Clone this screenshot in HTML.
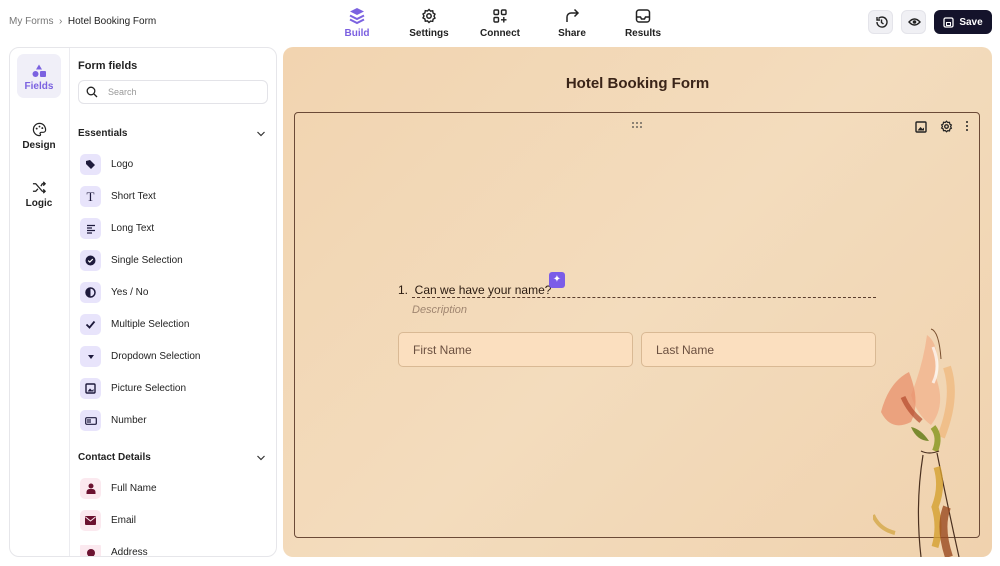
<!DOCTYPE html>
<html><head><meta charset="utf-8"><style>
*{box-sizing:border-box;margin:0;padding:0}
body{width:1000px;height:566px;background:#fff;font-family:"Liberation Sans",sans-serif;color:#1a1a2e;position:relative;overflow:hidden}
.abs{position:absolute}
.crumb{left:9px;top:16px;font-size:10px;color:#777}
.crumb b{font-weight:normal;color:#222}
.nav{top:0;width:70px;text-align:center;font-size:10px;font-weight:bold;color:#222}
.nav svg{display:block;margin:7px auto 3px}
.btn{top:10px;width:25px;height:24px;border-radius:6px;background:#f0f0f4;border:1px solid #e4e4ea}
.save{left:934px;top:10px;width:58px;height:24px;border-radius:6px;background:#14132b;color:#fff;font-size:10px;font-weight:bold;display:flex;align-items:center;justify-content:center;gap:5px}
.side{left:9px;top:47px;width:268px;height:510px;border:1px solid #e6e6ea;border-radius:10px;overflow:hidden}
.col{left:59px;top:0;width:1px;height:510px;background:#ececf0}
.tab{left:7px;width:44px;height:44px;border-radius:7px;text-align:center;font-size:10px;font-weight:bold;color:#222}
.tab svg{display:block;margin:10px auto 3px}
.item{left:70px;font-size:10px;color:#222;display:flex;align-items:center;gap:10px}
.ic{width:21px;height:21px;border-radius:5px;background:#e8e4fb;display:flex;align-items:center;justify-content:center}
.ic.p{background:#fbe9ef}
.hd{left:68px;font-size:10px;font-weight:bold;color:#222}
.chev{left:246px}
.canvas{left:283px;top:47px;width:709px;height:510px;border-radius:10px;background:linear-gradient(135deg,#f2d4b0,#f3dcbd 50%,#f0d2ae);overflow:hidden}
.inner{left:11px;top:65px;width:686px;height:426px;border:1px solid #6b4a37;border-radius:4px}
.fld{top:285px;width:235px;height:35px;border:1px solid #d9b994;border-radius:5px;background:#fbdfbf;font-size:12px;color:#6b5040;padding:10px 0 0 14px}
</style></head><body>
<div class="abs crumb">My Forms &nbsp;›&nbsp; <b>Hotel Booking Form</b></div>

<div class="abs nav" style="left:322px;color:#7b5fe0"><svg width="16" height="18" viewBox="0 0 16 18"><path d="M8 1L15 4.5 8 8 1 4.5Z" fill="#7b62e0"/><path d="M1 8.5L8 12 15 8.5M1 12.5L8 16 15 12.5" stroke="#7b62e0" stroke-width="2" fill="none"/></svg>Build</div>
<div class="abs nav" style="left:394px"><svg width="16" height="18" viewBox="0 0 16 16"><circle cx="8" cy="8" r="2.2" fill="none" stroke="#222" stroke-width="1.5"/><path d="M8 1.5l1.5 1.6 2.2-.3.4 2.2 1.9 1.1-1 2 1 2-1.9 1.1-.4 2.2-2.2-.3L8 14.5l-1.5-1.6-2.2.3-.4-2.2L2 9.9l1-1.9-1-2 1.9-1.1.4-2.2 2.2.3z" fill="none" stroke="#222" stroke-width="1.4"/></svg>Settings</div>
<div class="abs nav" style="left:465px"><svg width="16" height="18" viewBox="0 0 16 16"><rect x="2" y="2" width="4.5" height="4.5" rx="1" fill="none" stroke="#222" stroke-width="1.4"/><rect x="9.5" y="2" width="4.5" height="4.5" rx="1" fill="none" stroke="#222" stroke-width="1.4"/><rect x="2" y="9.5" width="4.5" height="4.5" rx="1" fill="none" stroke="#222" stroke-width="1.4"/><path d="M11.8 9v5.5M9 11.8h5.5" stroke="#222" stroke-width="1.4"/></svg>Connect</div>
<div class="abs nav" style="left:537px"><svg width="16" height="18" viewBox="0 0 16 16"><path d="M3 14V9a4 4 0 0 1 4-4h7M10.5 1.5L14 5l-3.5 3.5" fill="none" stroke="#222" stroke-width="1.5"/></svg>Share</div>
<div class="abs nav" style="left:608px"><svg width="16" height="18" viewBox="0 0 16 16"><rect x="1.5" y="2" width="13" height="12" rx="2.5" fill="none" stroke="#222" stroke-width="1.5"/><path d="M1.5 9h4l1 2h3l1-2h4" fill="none" stroke="#222" stroke-width="1.5"/></svg>Results</div>

<div class="abs btn" style="left:868px"><svg width="25" height="22" viewBox="0 0 25 22"><path d="M8 11a5 5 0 1 0 1.5-3.5M8 6v3h3M12.5 8.5v3l2 1.5" fill="none" stroke="#222" stroke-width="1.4"/></svg></div>
<div class="abs btn" style="left:901px"><svg width="25" height="22" viewBox="0 0 25 22"><path d="M7 11q5.5-6 11 0q-5.5 6-11 0z" fill="none" stroke="#222" stroke-width="1.4"/><circle cx="12.5" cy="11" r="1.8" fill="#222"/></svg></div>
<div class="abs save"><svg width="11" height="11" viewBox="0 0 11 11"><rect x="1" y="1" width="9" height="9" rx="1.5" fill="none" stroke="#fff" stroke-width="1.3"/><rect x="3.5" y="5.5" width="4" height="3" fill="none" stroke="#fff" stroke-width="1"/></svg>Save</div>

<div class="abs side">
<div class="abs col"></div>
<div class="abs tab" style="top:6px;background:#f0eff8;color:#7b62e0"><svg width="14" height="14" viewBox="0 0 14 14"><path d="M7 0.5L10 5.5H4Z" fill="#7b62e0"/><circle cx="3.5" cy="10" r="3" fill="#7b62e0"/><rect x="8" y="7" width="6" height="6" rx="1" fill="#7b62e0"/></svg>Fields</div>
<div class="abs tab" style="top:64px"><svg width="15" height="15" viewBox="0 0 16 16"><path d="M8 1.5a6.5 6.5 0 1 0 0 13c1.2 0 1.3-1 .8-1.7-.6-.8 0-1.8 1-1.8H12a2.5 2.5 0 0 0 2.5-2.5C14.5 4.3 11.6 1.5 8 1.5z" fill="none" stroke="#222" stroke-width="1.3"/><circle cx="5" cy="7" r="1" fill="#222"/><circle cx="8" cy="4.8" r="1" fill="#222"/><circle cx="11" cy="6.5" r="1" fill="#222"/></svg>Design</div>
<div class="abs tab" style="top:122px"><svg width="15" height="15" viewBox="0 0 16 16"><path d="M1 4h3l7 8h3M1 12h3l2.3-2.6M9.5 6.6L11 4h3M12 2l2 2-2 2M12 10l2 2-2 2" fill="none" stroke="#222" stroke-width="1.4"/></svg>Logic</div>
<div class="abs" style="left:68px;top:12px;font-size:11px;font-weight:bold;color:#222">Form fields</div>
<div class="abs" style="left:68px;top:32px;width:190px;height:24px;border:1px solid #e3e3e8;border-radius:6px;font-size:9px;color:#999;padding:6px 0 0 29px"><svg class="abs" style="left:7px;top:5px" width="12" height="12" viewBox="0 0 12 12"><circle cx="5" cy="5" r="3.8" fill="none" stroke="#222" stroke-width="1.3"/><path d="M8 8l3 3" stroke="#222" stroke-width="1.3"/></svg>Search</div>
<div class="abs hd" style="top:80px">Essentials</div>
<svg class="abs chev" style="top:82px" width="10" height="8"><path d="M1.5 2l3.5 3.5L8.5 2" stroke="#333" stroke-width="1.2" fill="none"/></svg>
<div class="abs item" style="top:106px"><div class="ic"><svg width="11" height="11"><path d="M1 2l4-1 5 5-4 4-5-5z" fill="#1e1a3c"/></svg></div>Logo</div>
<div class="abs item" style="top:138px"><div class="ic" style="font-family:'Liberation Serif';font-size:13px;color:#1e1a3c">T</div>Short Text</div>
<div class="abs item" style="top:170px"><div class="ic"><svg width="10" height="10"><path d="M1 1.5h8M1 4h5M1 6.5h8M1 9h5" stroke="#1e1a3c" stroke-width="1.3"/></svg></div>Long Text</div>
<div class="abs item" style="top:202px"><div class="ic"><svg width="11" height="11"><circle cx="5.5" cy="5.5" r="5" fill="#1e1a3c"/><path d="M3.2 5.6l1.6 1.5 3-3" stroke="#fff" stroke-width="1.2" fill="none"/></svg></div>Single Selection</div>
<div class="abs item" style="top:234px"><div class="ic"><svg width="11" height="11"><circle cx="5.5" cy="5.5" r="4.5" fill="none" stroke="#1e1a3c" stroke-width="1.5"/><path d="M5.5 1a4.5 4.5 0 0 0 0 9z" fill="#1e1a3c"/></svg></div>Yes / No</div>
<div class="abs item" style="top:266px"><div class="ic"><svg width="11" height="11"><path d="M1.5 5.5l3 3 5-6" stroke="#1e1a3c" stroke-width="1.8" fill="none"/></svg></div>Multiple Selection</div>
<div class="abs item" style="top:298px"><div class="ic"><svg width="8" height="6"><path d="M1 1h6L4 5z" fill="#1e1a3c"/></svg></div>Dropdown Selection</div>
<div class="abs item" style="top:330px"><div class="ic"><svg width="11" height="11"><rect x="1" y="1" width="9" height="9" rx="1" fill="none" stroke="#1e1a3c" stroke-width="1.4"/><path d="M2.5 8.5l2.5-3 2 2 1.5-1.5v2.5z" fill="#1e1a3c"/></svg></div>Picture Selection</div>
<div class="abs item" style="top:362px"><div class="ic"><svg width="12" height="8"><rect x="0.7" y="0.7" width="10.6" height="6.6" rx="1" fill="none" stroke="#1e1a3c" stroke-width="1.2"/><path d="M3 2v4M5 2v4" stroke="#1e1a3c" stroke-width="1.2"/></svg></div>Number</div>
<div class="abs hd" style="top:404px">Contact Details</div>
<svg class="abs chev" style="top:406px" width="10" height="8"><path d="M1.5 2l3.5 3.5L8.5 2" stroke="#333" stroke-width="1.2" fill="none"/></svg>
<div class="abs item" style="top:430px"><div class="ic p"><svg width="10" height="11"><circle cx="5" cy="3" r="2.5" fill="#6b1230"/><path d="M0.5 11v-2a3 3 0 0 1 3-3h3a3 3 0 0 1 3 3v2z" fill="#6b1230"/></svg></div>Full Name</div>
<div class="abs item" style="top:462px"><div class="ic p"><svg width="11" height="9"><rect x="0" y="0" width="11" height="9" rx="1" fill="#6b1230"/><path d="M0.5 1l5 4 5-4" stroke="#fbe9ef" fill="none"/></svg></div>Email</div>
<div class="abs" style="left:60px;top:497px;width:207px;height:13px;overflow:hidden"><div class="abs item" style="left:10px;top:-3px"><div class="ic p"><svg width="10" height="10"><circle cx="5" cy="5" r="4" fill="#6b1230"/></svg></div>Address</div></div>
</div>

<div class="abs canvas">
<div class="abs" style="left:0;width:709px;top:28px;text-align:center;font-size:15px;font-weight:bold;color:#3a2418">Hotel Booking Form</div>
<div class="abs inner">
<svg class="abs" style="left:337px;top:9px" width="11" height="6"><g fill="#444"><circle cx="1" cy="1" r="0.9"/><circle cx="5" cy="1" r="0.9"/><circle cx="9" cy="1" r="0.9"/><circle cx="1" cy="5" r="0.9"/><circle cx="5" cy="5" r="0.9"/><circle cx="9" cy="5" r="0.9"/></g></svg>
<svg class="abs" style="left:620px;top:8px" width="12" height="12"><rect x="1" y="1" width="10" height="10" rx="1" fill="none" stroke="#222" stroke-width="1.4"/><path d="M2.5 9.5l3-3.5 2 2 1.5-1.5v3z" fill="#222"/></svg>
<svg class="abs" style="left:645px;top:7px" width="13" height="13" viewBox="0 0 16 16"><circle cx="8" cy="8" r="2.2" fill="none" stroke="#222" stroke-width="1.6"/><path d="M8 1.5l1.5 1.6 2.2-.3.4 2.2 1.9 1.1-1 2 1 2-1.9 1.1-.4 2.2-2.2-.3L8 14.5l-1.5-1.6-2.2.3-.4-2.2L2 9.9l1-1.9-1-2 1.9-1.1.4-2.2 2.2.3z" fill="none" stroke="#222" stroke-width="1.5"/></svg>
<div class="abs" style="left:671px;top:8px;width:2px;font-size:0"><div style="width:2px;height:2px;background:#222;margin-bottom:2px;border-radius:1px"></div><div style="width:2px;height:2px;background:#222;margin-bottom:2px;border-radius:1px"></div><div style="width:2px;height:2px;background:#222;border-radius:1px"></div></div>
</div>
<div class="abs" style="left:115px;top:236px;font-size:12px;color:#2a1a10">1.&nbsp; Can we have your name?</div>
<div class="abs" style="left:266px;top:225px;width:16px;height:16px;border-radius:3px;background:#7b5ce8;color:#fff;font-size:10px;text-align:center;line-height:16px">✦</div>
<div class="abs" style="left:129px;top:250px;width:464px;border-top:1px dashed #5a3e2e"></div>
<div class="abs" style="left:129px;top:257px;font-size:11px;font-style:italic;color:#a08670">Description</div>
<div class="abs fld" style="left:115px">First Name</div>
<div class="abs fld" style="left:358px">Last Name</div>
<svg class="abs" style="left:590px;top:280px" width="119" height="230" viewBox="0 0 119 230">
<path d="M58 2q8 2 10 30" stroke="#7a5030" fill="none"/>
<path d="M54 8q14 10 8 40 12 30-4 50-14-10-20-30 12-30 16-60z" fill="#f2b48e" opacity=".8"/>
<path d="M36 45q-20 10-28 40 10 20 30 10 10-20-2-50z" fill="#e8906c" opacity=".75"/>
<path d="M30 70q6 14 18 24" stroke="#b4482c" stroke-width="5" fill="none" opacity=".7"/>
<path d="M60 20q8 20 0 36" stroke="#fff" stroke-width="3" fill="none" opacity=".7"/>
<path d="M74 40q10 30-6 70" stroke="#f0b070" stroke-width="8" fill="none" opacity=".6"/>
<path d="M38 100q10 2 18 14-12 0-18-14z" fill="#7a8a30"/>
<path d="M60 100q8 10 2 24" stroke="#9aa23a" stroke-width="6" fill="none"/>
<path d="M50 128q-8 50-2 102M64 126q10 50 22 104M48 124q8 4 18 0" stroke="#4a3020" fill="none" stroke-width="1.2"/>
<path d="M64 140q6 20-2 40 6 20 0 40" stroke="#d4a030" stroke-width="7" fill="none" opacity=".8"/>
<path d="M74 180q-8 20 2 50" stroke="#9a4a20" stroke-width="8" fill="none" opacity=".8"/>
<path d="M0 188q6 14 22 18" stroke="#d4a848" stroke-width="4" fill="none" opacity=".8"/>
</svg>
</div>
</body></html>
